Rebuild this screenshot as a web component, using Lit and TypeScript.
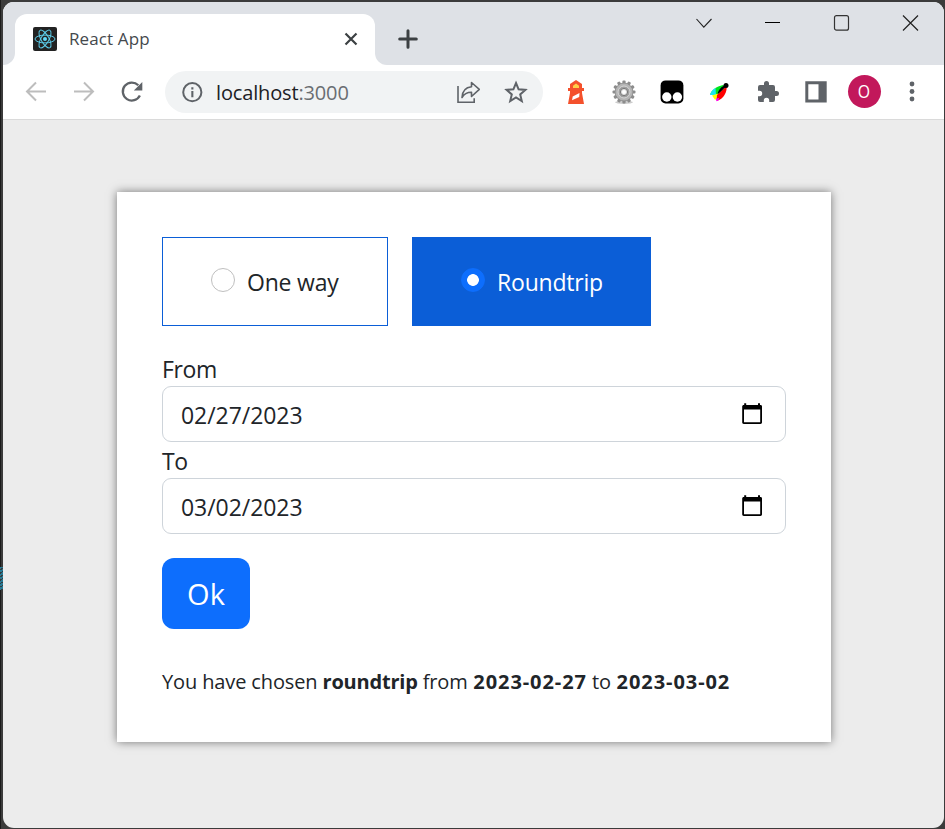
import { LitElement, html, css, svg } from "lit";
import { customElement, property } from "lit/decorators.js";

const teeth = Array.from({ length: 12 }, (_, i) => i * 30);

const icons = {
  back: svg`<path d="M22 11.500H3.500M12 2.500l-9 9 9 9" fill="none" stroke="#bdbdbd" stroke-width="2"/>`,
  forward: svg`<path d="M2 11.500h18.500M12 2.500l9 9-9 9" fill="none" stroke="#bdbdbd" stroke-width="2"/>`,
  reload: svg`<path d="M19.900 15.500A9 9 0 1 1 18.300 5.300" fill="none" stroke="#5f6368" stroke-width="2.300"/><path d="M22.300 2v8.500H13.800z" fill="#5f6368"/>`,
  info: svg`<circle cx="12.300" cy="12.200" r="9.100" fill="none" stroke="#5f6368" stroke-width="2"/><path d="M11.300 11H13.400v6.200H11.300zM11.300 7.200H13.400v2.200H11.300z" fill="#5f6368"/>`,
  share: svg`<path d="M2 6v16.300h16.200v-4" fill="none" stroke="#5f6368" stroke-width="1.600"/><path d="M15.500 2.500 23.300 9.300l-7.800 7.200v-4.200C11 12.300 8 13.800 6 17.500c.3-6.500 3.500-10.200 9.500-10.800z" fill="none" stroke="#5f6368" stroke-width="1.600" stroke-linejoin="round"/>`,
  star: svg`<path d="m12 3 2.600 6.300 6.800.6-5.200 4.500 1.600 6.700L12 17.500l-5.800 3.600 1.600-6.700L2.600 9.900l6.800-.6z" fill="none" stroke="#5f6368" stroke-width="2"/>`,
  lighthouse: svg`<path d="M12 0l6 4v4h2v3h-2v2l2 11H4L6 13v-2H4V8h2V4z" fill="#f4512c"/><path d="M9 8V5.800L12 3.500l3 2.300V8z" fill="#ffcf48"/><path d="M8.700 16.500 15.500 13l-.3 4-7.200 3.200z" fill="#fff"/>`,
  gear: svg`<ellipse cx="12" cy="22.300" rx="9" ry="1.600" fill="#ccc"/>${teeth.map(a => svg`<rect x="10.400" y="0.500" width="3.200" height="5" rx="1" fill="#8d8d8d" transform="rotate(${a} 12 12)"/>`)}<circle cx="12" cy="12" r="9" fill="#b4b4b4" stroke="#888" stroke-width=".8"/><circle cx="12" cy="12" r="6" fill="#a0a0a0" stroke="#d6d6d6"/><circle cx="12" cy="12" r="3.600" fill="#ddd" stroke="#777"/><circle cx="12" cy="12" r="2" fill="#fff"/>`,
  mask: svg`<rect x=".6" y=".4" width="22.800" height="23" rx="5" fill="#000"/><circle cx="6.800" cy="17" r="4.700" fill="#fff"/><circle cx="17.400" cy="17" r="4.700" fill="#fff"/>`,
  feather: svg`<path d="M2 14.500C4 10 8 6.500 15 5l2 1-8 10z" fill="#00e51b"/><path d="M2 15C3 11.500 5 9 7.500 8L8 15z" fill="#18e7ef"/><path d="M4 15.500l6-2 2 4-5 2.200z" fill="#ff0"/><path d="M9 15l9.500-9c1 6-3 13-9.800 15z" fill="#f00"/><path d="M8 18.500l3.200-.5-1 2.800-1.700.5z" fill="#f0f"/><path d="M9.500 14c1-4 4-8 8-8.800l.8 1.600c-3 1.500-5 5.500-8.800 7.200z" fill="#000"/><circle cx="18" cy="5.500" r="2.500" fill="#000"/>`,
  puzzle: svg`<path d="M20.500 11H19V7a2 2 0 0 0-2-2h-4V3.500a2.500 2.500 0 0 0-5 0V5H4a2 2 0 0 0-2 2v3.800h1.500a2.700 2.700 0 0 1 0 5.400H2V20a2 2 0 0 0 2 2h3.800v-1.500a2.700 2.700 0 0 1 5.400 0V22H17a2 2 0 0 0 2-2v-4h1.500a2.500 2.500 0 0 0 0-5z" fill="#5f6368"/>`,
  panel: svg`<path d="M1.300 1.300h21.400v21.200H1.300zM4.300 4.300v15.200h10.200V4.300z" fill="#5f6368" fill-rule="evenodd"/>`,
  dots: svg`<g fill="#5f6368"><circle cx="12" cy="4" r="2.400"/><circle cx="12" cy="11.500" r="2.400"/><circle cx="12" cy="19" r="2.400"/></g>`,
  close: svg`<path d="m6.500 6.500 11 11m0-11-11 11" stroke="#3c4043" stroke-width="2.200"/>`,
  plus: svg`<path d="M12 3.700v16.600M3.700 12h16.600" stroke="#3c4043" stroke-width="3" stroke-linecap="round"/>`,
  chevron: svg`<path d="m4.500 8 7.300 8.200L19.500 8" fill="none" stroke="#222" stroke-width="1.100"/>`,
  minimize: svg`<path d="M4 11.500h15" stroke="#000" stroke-width="1"/>`,
  maximize: svg`<rect x="4.500" y="4.700" width="14" height="14.500" rx="2" fill="none" stroke="#333" stroke-width="1.200"/>`,
  exit: svg`<path d="m4 4.500 15 15m0-15-15 15" stroke="#222" stroke-width="1.200"/>`,
  calendar: svg`<path d="M4.200 1.200h2V3H18V1.200h2V3h.5c1 0 1.500.6 1.500 1.500V20.300c0 1-.6 1.700-1.600 1.700H3.800c-1 0-1.600-.7-1.600-1.700V4.500C2.200 3.600 2.800 3 3.700 3h.5zM4 7.500v12.700H20.200V7.500z" fill="#000" fill-rule="evenodd"/>`,
  react: svg`<rect width="24" height="24" rx="2" fill="#222"/><g fill="none" stroke="#5ccbe8" stroke-width="1">${[0, 60, 120].map(a => svg`<ellipse cx="12" cy="12" rx="10" ry="3.900" transform="rotate(${a} 12 12)"/>`)}</g><circle cx="12" cy="12" r="2" fill="#61dafb"/>`,
};

const icon = (name: keyof typeof icons) =>
  html`<svg width="24" height="24" viewBox="0 0 24 24" aria-hidden="true">${icons[name]}</svg>`;

const base = css`
  * { box-sizing: border-box; }
  svg { display: block; flex: none; }
`;

@customElement("browser-chrome")
class BrowserChrome extends LitElement {
  static styles = [base, css`
    :host { display: block; font-family: "Open Sans", "Noto Sans", sans-serif; }
    .strip { height: 63px; background: #dee1e6; display: flex; align-items: flex-start; }
    .foot { width: 12px; height: 63px; background: linear-gradient(#fff, #fff) bottom / 100% 12px no-repeat; }
    .foot i { display: block; height: 100%; background: #dee1e6; border-radius: 0 0 12px 0; }
    .tab { width: 360px; height: 51px; margin-top: 12px; padding: 0 12px 2px 18px; display: flex; align-items: center; background: #fff; border-radius: 12px 12px 0 0; }
    .title { flex: 1; padding-left: 12px; font-size: 17px; color: #45494d; letter-spacing: .12px; }
    .rest { flex: 1; height: 63px; background: linear-gradient(#fff, #fff) left bottom / 12px 12px no-repeat; }
    .rest-in { height: 100%; display: flex; justify-content: space-between; background: #dee1e6; border-radius: 0 0 0 12px; }
    .plus { padding: 25px 0 0 21px; }
    .controls { display: flex; padding: 9px 21.500px 0 0; gap: 45px; }
    .bar { height: 55px; padding: 0 9px; display: flex; align-items: center; background: #fff; border-bottom: 1px solid #dadada; }
    .cell { width: 48px; display: flex; justify-content: center; flex: none; }
    .url { width: 378px; height: 42px; margin: 0 9px; padding: 0 15px; border-radius: 21px; background: #f1f3f4; display: flex; align-items: center; flex: none; }
    .address { flex: 1; padding-left: 12px; font-size: 20px; letter-spacing: -.15px; color: #202124; }
    .address span { color: #696d72; }
    .star { margin-left: 24px; }
    .avatar { width: 33px; height: 33px; margin-bottom: 1px; border-radius: 50%; background: #c2185b; color: #fff; display: flex; align-items: center; justify-content: center; font-size: 18px; line-height: 1; }
    .avatar span { transform: translateY(-1px) scaleX(.88); }
  `];

  render() {
    return html`
      <div class="strip">
        <div class="foot"><i></i></div>
        <div class="tab">${icon("react")}<span class="title">React App</span>${icon("close")}</div>
        <div class="rest"><div class="rest-in">
          <div class="plus">${icon("plus")}</div>
          <div class="controls">${icon("chevron")}${icon("minimize")}${icon("maximize")}${icon("exit")}</div>
        </div></div>
      </div>
      <div class="bar">
        ${(["back", "forward", "reload"] as const).map(n => html`<div class="cell">${icon(n)}</div>`)}
        <div class="url">${icon("info")}<div class="address">localhost<span>:3000</span></div>${icon("share")}<div class="star">${icon("star")}</div></div>
        ${(["lighthouse", "gear", "mask", "feather", "puzzle", "panel"] as const).map(n => html`<div class="cell">${icon(n)}</div>`)}
        <div class="cell"><div class="avatar"><span>O</span></div></div>
        <div class="cell">${icon("dots")}</div>
      </div>`;
  }
}

@customElement("date-field")
class DateField extends LitElement {
  @property() label = "";
  @property() value = "";
  static styles = [base, css`
    :host { display: block; font-size: 23px; line-height: 36px; letter-spacing: -.05px; }
    .label { padding-top: 1px; height: 36px; letter-spacing: -.4px; }
    .box { height: 56px; padding: 0 21px 0 18px; display: flex; align-items: center; justify-content: space-between; border: 1px solid #ced4da; border-radius: 9px; background: #fff; }
    .box span { padding-top: 2px; }
  `];
  render() {
    return html`<div class="label">${this.label}</div><div class="box"><span>${this.value}</span>${icon("calendar")}</div>`;
  }
}

@customElement("trip-form")
class TripForm extends LitElement {
  static styles = [base, css`
    :host { display: block; width: 714px; height: 550px; padding: 45px; background: #fff; box-shadow: 0 0 9px rgba(0, 0, 0, .5); color: #212529; font-family: "Open Sans", "Noto Sans", sans-serif; font-size: 23px; line-height: 36px; }
    .choices { display: flex; gap: 24px; margin-bottom: 24px; }
    .choice { height: 89px; width: 226px; padding-left: 48px; display: flex; align-items: center; border: 1px solid #0b5ed7; letter-spacing: -.2px; }
    .choice b { font-weight: 400; }
    .choice.on { width: 239px; background: #0b5ed7; color: #fff; }
    .radio { width: 24px; height: 24px; margin: 0 12px 3px 0; border: 1px solid #bfbfbf; border-radius: 50%; }
    .on .radio { border-color: #0d6efd; background: radial-gradient(circle, #fff 5.500px, #0d6efd 6.200px); }
    .ok { display: flex; width: 88px; height: 71px; margin-top: 24px; padding-top: 1px; align-items: center; justify-content: center; border: 0; border-radius: 12px; background: #0d6efd; color: #fff; font: 29px "Open Sans", "Noto Sans", sans-serif; }
    .summary { margin: 35px 0 0; font-size: 20px; letter-spacing: -.13px; white-space: nowrap; }
    .summary b { letter-spacing: -.2px; }
    .summary .date { letter-spacing: .93px; margin-left: .6px; }
  `];
  render() {
    return html`
      <div class="choices">
        <div class="choice"><span class="radio"></span><b>One way</b></div>
        <div class="choice on"><span class="radio"></span><b>Roundtrip</b></div>
      </div>
      <date-field label="From" value="02/27/2023"></date-field>
      <date-field label="To" value="03/02/2023"></date-field>
      <button class="ok">Ok</button>
      <p class="summary">You have chosen <b>roundtrip</b> from <b class="date">2023-02-27</b> to <b class="date">2023-03-02</b></p>`;
  }
}

@customElement("app-root")
class AppRoot extends LitElement {
  static styles = [base, css`
    :host { display: block; width: 945px; height: 829px; overflow: hidden; position: relative; background: linear-gradient(90deg, #1b1b1b 1px, #3b3b3b 1px); }
    .frame { height: 829px; padding: 2px 1px 1px 3px; }
    .window { height: 826px; border-radius: 11px; overflow: hidden; background: #ececec; }
    .page { display: flex; justify-content: center; padding-top: 72px; }
    .page trip-form { margin-left: 1px; }
    .speck { position: absolute; left: 0; top: 567px; width: 3px; height: 23px; background: repeating-linear-gradient(150deg, #287b96 0 2px, #343c40 2px 3px); }
  `];
  render() {
    return html`
      <div class="speck"></div>
      <div class="frame"><div class="window">
        <browser-chrome></browser-chrome>
        <div class="page"><trip-form></trip-form></div>
      </div></div>`;
  }
}
